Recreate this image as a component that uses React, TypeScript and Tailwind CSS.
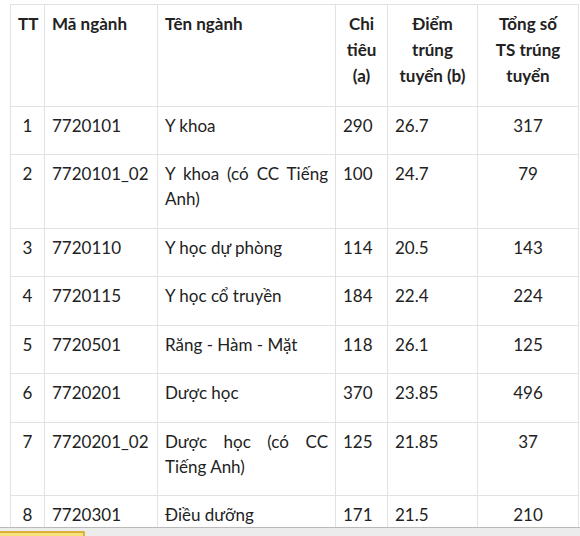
import { FC } from "react";

type Row = {
  tt: string;
  ma: string;
  ten: string;
  chi: string;
  diem: string;
  tong: string;
};

const rows: Row[] = [
  { tt: "1", ma: "7720101", ten: "Y khoa", chi: "290", diem: "26.7", tong: "317" },
  { tt: "2", ma: "7720101_02", ten: "Y khoa (có CC Tiếng Anh)", chi: "100", diem: "24.7", tong: "79" },
  { tt: "3", ma: "7720110", ten: "Y học dự phòng", chi: "114", diem: "20.5", tong: "143" },
  { tt: "4", ma: "7720115", ten: "Y học cổ truyền", chi: "184", diem: "22.4", tong: "224" },
  { tt: "5", ma: "7720501", ten: "Răng - Hàm - Mặt", chi: "118", diem: "26.1", tong: "125" },
  { tt: "6", ma: "7720201", ten: "Dược học", chi: "370", diem: "23.85", tong: "496" },
  { tt: "7", ma: "7720201_02", ten: "Dược học (có CC Tiếng Anh)", chi: "125", diem: "21.85", tong: "37" },
  { tt: "8", ma: "7720301", ten: "Điều dưỡng", chi: "171", diem: "21.5", tong: "210" },
];

const cell = "border border-[#e2e2e2] px-[7px] pt-[6px] pb-[16.5px] align-top";

const App: FC = () => {
  return (
    <div className="flex h-[536px] w-[580px] flex-col bg-white font-['Lato','Liberation_Sans',sans-serif] text-[17px] leading-[25px] text-[#222]">
      {/* table area, cut off by the bar below */}
      <div className="flex-1 overflow-hidden pl-[10px] pt-[4px]">
        <table className="w-[568px] table-fixed border-collapse">
          <colgroup>
            <col className="w-[34px]" />
            <col className="w-[113px]" />
            <col className="w-[178px]" />
            <col className="w-[52px]" />
            <col className="w-[90px]" />
            <col className="w-[101px]" />
          </colgroup>
          <thead>
            <tr className="font-bold leading-[26px]">
              <th className={`${cell} px-0 text-center`}>TT</th>
              <th className={`${cell} text-left`}>Mã ngành</th>
              <th className={`${cell} text-left`}>Tên ngành</th>
              <th className={`${cell} px-0 text-center`}>
                Chi
                <br />
                tiêu
                <br />
                (a)
              </th>
              <th className={`${cell} px-0 text-center`}>
                Điểm
                <br />
                trúng
                <br />
                tuyển (b)
              </th>
              <th className={`${cell} px-0 text-center`}>
                Tổng số
                <br />
                TS trúng
                <br />
                tuyển
              </th>
            </tr>
          </thead>
          <tbody>
            {rows.map((r) => (
              <tr key={r.tt}>
                <td className={`${cell} px-0 text-center`}>{r.tt}</td>
                <td className={cell}>{r.ma}</td>
                <td className={`${cell} text-justify`}>{r.ten}</td>
                <td className={cell}>{r.chi}</td>
                <td className={cell}>{r.diem}</td>
                <td className={`${cell} text-center`}>{r.tong}</td>
              </tr>
            ))}
          </tbody>
        </table>
      </div>

      {/* bottom strip with yellow tab */}
      <div className="h-[9px] shrink-0 border-t border-[#b9b9b9] bg-[#ececec] pt-[3px]">
        <div className="h-full w-[85px] rounded-tr-[2px] border-t-2 border-r-2 border-[#d9b13a] bg-[#f6e27a]" />
      </div>
    </div>
  );
};

export default App;
